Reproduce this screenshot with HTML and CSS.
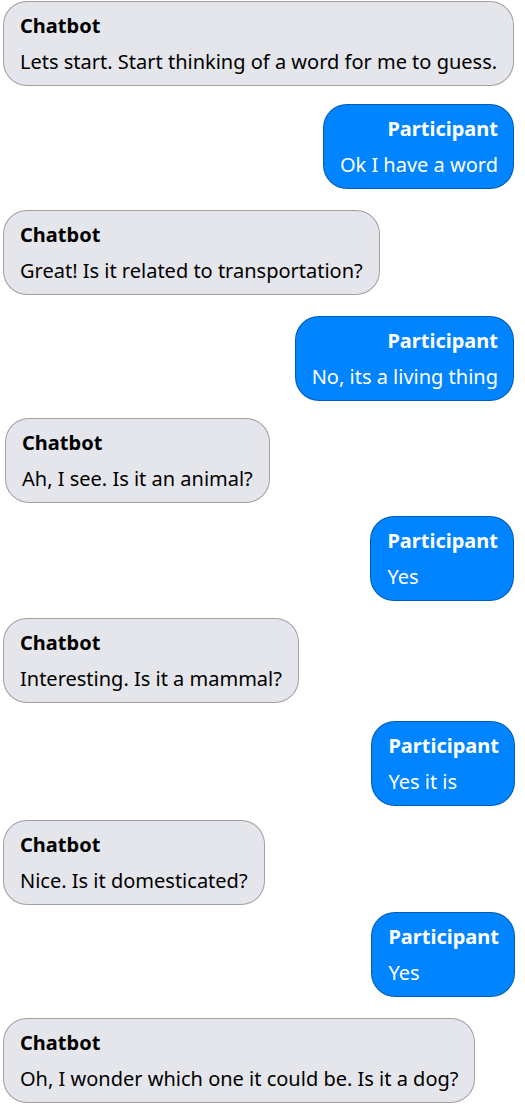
FILE: index.html
```html
<!DOCTYPE html>
<html lang="en">
<head>
<meta charset="utf-8">
<title>Chat</title>
<link rel="stylesheet" href="styles.css">
</head>
<body>
<div class="chat">
  <div class="msg bot first">
    <div class="who">Chatbot</div>
    <div class="text">Lets start. Start thinking of a word for me to guess.</div>
  </div>
  <div class="msg user gap-18">
    <div class="who">Participant</div>
    <div class="text">Ok I have a word</div>
  </div>
  <div class="msg bot gap-21">
    <div class="who">Chatbot</div>
    <div class="text">Great! Is it related to transportation?</div>
  </div>
  <div class="msg user gap-21">
    <div class="who">Participant</div>
    <div class="text">No, its a living thing</div>
  </div>
  <div class="msg bot gap-17 shift">
    <div class="who">Chatbot</div>
    <div class="text">Ah, I see. Is it an animal?</div>
  </div>
  <div class="msg user gap-13">
    <div class="who">Participant</div>
    <div class="text">Yes</div>
  </div>
  <div class="msg bot gap-17">
    <div class="who">Chatbot</div>
    <div class="text">Interesting. Is it a mammal?</div>
  </div>
  <div class="msg user gap-18 far">
    <div class="who">Participant</div>
    <div class="text">Yes it is</div>
  </div>
  <div class="msg bot gap-14">
    <div class="who">Chatbot</div>
    <div class="text">Nice. Is it domesticated?</div>
  </div>
  <div class="msg user gap-7 far">
    <div class="who">Participant</div>
    <div class="text">Yes</div>
  </div>
  <div class="msg bot gap-21">
    <div class="who">Chatbot</div>
    <div class="text">Oh, I wonder which one it could be. Is it a dog?</div>
  </div>
</div>
</body>
</html>
```
FILE: styles.css
```css
html, body {
  margin: 0;
  padding: 0;
  background: #ffffff;
}

body {
  font-family: "Noto Sans", "Open Sans", sans-serif;
  font-size: 20px;
  line-height: 27px;
}

.chat {
  display: flex;
  flex-direction: column;
  align-items: flex-start;
  padding: 1px 11px 0 3px;
}

.msg {
  box-sizing: border-box;
  display: flex;
  flex-direction: column;
  gap: 9px;
  padding: 10px 16px 10px 16px;
  border-radius: 24px;
  border: 1px solid rgba(0, 0, 0, 0.3);
  height: 85px;
  white-space: nowrap;
}

.bot {
  align-self: flex-start;
  background: #e5e6eb;
  color: #000000;
}

.user {
  align-self: flex-end;
  background: #0084ff;
  color: #ffffff;
  padding-right: 15px;
}

.user .who {
  text-align: right;
}

.who {
  font-weight: 700;
}

.shift {
  margin-left: 2px;
}

.far {
  margin-right: -1px;
}

.gap-7 { margin-top: 7px; }
.gap-13 { margin-top: 13px; }
.gap-14 { margin-top: 14px; }
.gap-17 { margin-top: 17px; }
.gap-18 { margin-top: 18px; }
.gap-21 { margin-top: 21px; }
```
